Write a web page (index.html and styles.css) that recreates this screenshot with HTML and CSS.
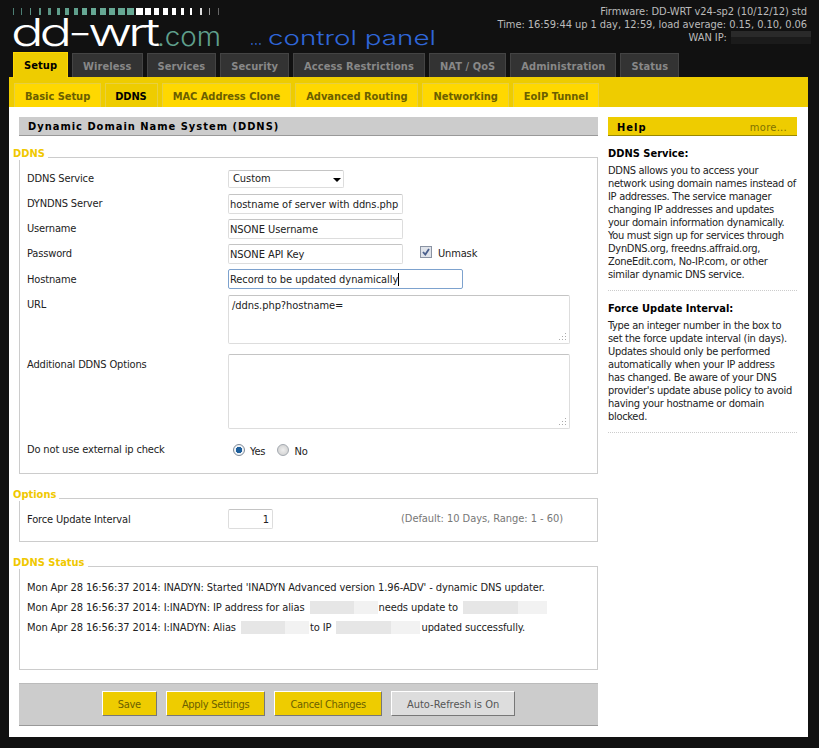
FILE: index.html
```html
<!DOCTYPE html>
<html lang="en">
<head>
<meta charset="utf-8">
<title>DD-WRT DDNS</title>
<link rel="stylesheet" href="styles.css">
</head>
<body>
<div class="page">
  <header class="top">
    <svg class="logo" width="440" height="52" viewBox="0 0 440 52">
      <g class="ticks">
        <rect x="13" y="8" width="1" height="7" fill="#4d7f74"/><rect x="21" y="8" width="1" height="7" fill="#4d7f74"/><rect x="30" y="8" width="1" height="7" fill="#5a9384"/><rect x="39" y="8" width="2" height="7" fill="#5a9384"/><rect x="48" y="8" width="3" height="7" fill="#5a9384"/><rect x="57" y="8" width="3" height="7" fill="#5f9f8c"/><rect x="65" y="8" width="4" height="7" fill="#5f9f8c"/><rect x="74" y="8" width="4" height="7" fill="#5f9f8c"/><rect x="82" y="8" width="5" height="7" fill="#66a894"/><rect x="91" y="8" width="5" height="7" fill="#66a894"/><rect x="100" y="8" width="6" height="7" fill="#66a894"/><rect x="109" y="8" width="6" height="7" fill="#66a894"/><rect x="118" y="8" width="7" height="7" fill="#66a894"/><rect x="127" y="8" width="7" height="7" fill="#66a894"/><rect x="136" y="8" width="7" height="7" fill="#fff"/><rect x="145" y="8" width="6" height="7" fill="#fff"/><rect x="154" y="8" width="5" height="7" fill="#fff"/><rect x="163" y="8" width="5" height="7" fill="#fff"/><rect x="172" y="8" width="4" height="7" fill="#fff"/><rect x="181" y="8" width="3" height="7" fill="#fff"/><rect x="190" y="8" width="2" height="7" fill="#fff"/><rect x="200" y="8" width="2" height="7" fill="#ddd"/><rect x="209" y="8" width="1" height="7" fill="#999"/><rect x="218" y="8" width="1" height="7" fill="#666"/>
      </g>
      <text class="logo-main" x="11" y="46" textLength="145" lengthAdjust="spacingAndGlyphs">dd-wrt</text>
      <text class="logo-com" x="157" y="46" textLength="64" lengthAdjust="spacingAndGlyphs">.com</text>
      <text class="logo-dots" x="250" y="45" textLength="12" lengthAdjust="spacingAndGlyphs">...</text>
      <text class="logo-panel" x="268" y="45" textLength="168" lengthAdjust="spacingAndGlyphs">control panel</text>
    </svg>
    <div class="sysinfo">
      <div>Firmware: DD-WRT v24-sp2 (10/12/12) std</div>
      <div>Time: 16:59:44 up 1 day, 12:59, load average: 0.15, 0.10, 0.06</div>
      <div class="wan">WAN IP: <span class="mask-dark"></span></div>
    </div>
  </header>

  <nav class="tabs">
    <a class="tab active">Setup</a>
    <a class="tab">Wireless</a>
    <a class="tab">Services</a>
    <a class="tab">Security</a>
    <a class="tab">Access Restrictions</a>
    <a class="tab">NAT / QoS</a>
    <a class="tab">Administration</a>
    <a class="tab">Status</a>
  </nav>

  <nav class="subtabs">
    <a class="subtab">Basic Setup</a>
    <a class="subtab active">DDNS</a>
    <a class="subtab">MAC Address Clone</a>
    <a class="subtab">Advanced Routing</a>
    <a class="subtab">Networking</a>
    <a class="subtab">EoIP Tunnel</a>
  </nav>

  <div class="body">
    <main class="main">
      <h2 class="bar">Dynamic Domain Name System (DDNS)</h2>

      <fieldset class="group group-ddns">
        <legend>DDNS</legend>
        <div class="row r-service"><label>DDNS Service</label><span class="select">Custom<i class="arrow"></i></span></div>
        <div class="row r-server"><label>DYNDNS Server</label><span class="input w175">hostname of server with ddns.php</span></div>
        <div class="row r-user"><label>Username</label><span class="input w175">NSONE Username</span></div>
        <div class="row r-pass"><label>Password</label><span class="input w175">NSONE API Key</span>
          <span class="check"><svg class="check-box" width="12" height="12" viewBox="0 0 12 12"><rect x=".5" y=".5" width="11" height="11" fill="#dfe3ea" stroke="#8a93a3"/><path d="M3 6l2.3 2.6L9 3" fill="none" stroke="#4a5f8c" stroke-width="1.8"/></svg>Unmask</span></div>
        <div class="row r-host"><label>Hostname</label><span class="input w235 focus">Record to be updated dynamically<i class="caret"></i></span></div>
        <div class="row r-url"><label>URL</label><span class="area h49">/ddns.php?hostname=<svg class="grip" width="8" height="8" viewBox="0 0 8 8"><path d="M6 0h1v1H6zM3 3h1v1H3zM6 3h1v1H6zM0 6h1v1H0zM3 6h1v1H3zM6 6h1v1H6z" fill="#aaa"/></svg></span></div>
        <div class="row r-opts"><label>Additional DDNS Options</label><span class="area h75"><svg class="grip" width="8" height="8" viewBox="0 0 8 8"><path d="M6 0h1v1H6zM3 3h1v1H3zM6 3h1v1H6zM0 6h1v1H0zM3 6h1v1H3zM6 6h1v1H6z" fill="#aaa"/></svg></span></div>
        <div class="row r-ip"><label>Do not use external ip check</label>
          <span class="radios">
            <i class="radio on"></i><span class="rlabel">Yes</span>
            <i class="radio"></i><span class="rlabel">No</span>
          </span></div>
      </fieldset>

      <fieldset class="group group-options">
        <legend>Options</legend>
        <div class="row r-force"><label>Force Update Interval</label><span class="input w45 right">1</span><span class="hint">(Default: 10 Days, Range: 1 - 60)</span></div>
      </fieldset>

      <fieldset class="group group-status">
        <legend>DDNS Status</legend>
        <p>Mon Apr 28 16:56:37 2014: INADYN: Started 'INADYN Advanced version 1.96-ADV' - dynamic DNS updater.</p>
        <p>Mon Apr 28 16:56:37 2014: I:INADYN: IP address for alias <span class="mask m68"></span>needs update to <span class="mask m84"></span></p>
        <p>Mon Apr 28 16:56:37 2014: I:INADYN: Alias <span class="mask m68"></span>to IP <span class="mask m84"></span>updated successfully.</p>
      </fieldset>

      <div class="actions">
        <a class="btn">Save</a>
        <a class="btn">Apply Settings</a>
        <a class="btn">Cancel Changes</a>
        <a class="btn grey">Auto-Refresh is On</a>
      </div>
    </main>

    <aside class="help">
      <div class="help-bar"><b>Help</b><span>more...</span></div>
      <section class="help-item">
        <h3>DDNS Service:</h3>
        <p>DDNS allows you to access your network using domain names instead of IP addresses. The service manager changing IP addresses and updates your domain information dynamically. You must sign up for services through DynDNS.org, freedns.affraid.org, ZoneEdit.com, No-IP.com, or other similar dynamic DNS service.</p>
      </section>
      <section class="help-item narrow">
        <h3>Force Update Interval:</h3>
        <p>Type an integer number in the box to set the force update interval (in days). Updates should only be performed automatically when your IP address has changed. Be aware of your DNS provider's update abuse policy to avoid having your hostname or domain blocked.</p>
      </section>
    </aside>
  </div>
</div>
</body>
</html>
```
FILE: styles.css
```css
* { box-sizing: border-box; }
html, body { margin: 0; padding: 0; background: #111; height: 748px; overflow: hidden; }
body { font: 11px/13px "DejaVu Sans Condensed", "DejaVu Sans", sans-serif; font-stretch: condensed; color: #222; letter-spacing: -.15px; }
.page { width: 819px; padding-right: 11px; padding-left: 9px; }
.top { height: 52px; position: relative; margin-left: -9px; margin-right: -11px; }
.logo { display: block; }
.logo-main { font: 300 38px "Inter", sans-serif; letter-spacing: -3px; fill: #fff; }
.logo-com { font: 300 26px "Inter", sans-serif; letter-spacing: 0; fill: #5f9f8c; }
.logo-dots { font: 300 18px "Inter", sans-serif; letter-spacing: 0; fill: #2f66d8; }
.logo-panel { font: 300 20px "Inter", sans-serif; letter-spacing: 0; fill: #2f66d8; }
.sysinfo { position: absolute; right: 12px; top: 5px; text-align: right; color: #bbb; line-height: 13px; white-space: nowrap; letter-spacing: -.05px; }
.wan { margin-right: -4px; }
.mask-dark { display: inline-block; width: 80px; height: 13px; background: linear-gradient(#2a2a2a 0 6px, #1b1b1b 6px); vertical-align: top; margin-left: 1px; }

.tabs { display: flex; height: 25px; padding-left: 4px; gap: 4px; align-items: flex-end; letter-spacing: .08px; }
.tab { height: 24px; background: #333; border: 1px solid #444; border-bottom: 0; color: #888; font-weight: bold; padding: 6px 10px 0; white-space: nowrap; }
.tab.active { height: 26px; margin-bottom: -1px; background: #eecc00; border: 1px solid #ffd800; border-bottom: 0; color: #000; padding: 6px 10px 0; z-index: 1; }

.subtabs { display: flex; height: 30px; background: #eecc00; padding: 6px 0 0 5px; gap: 4px; letter-spacing: -.03px; }
.subtab { height: 24px; background: #ffd800; border: 1px solid #e8d040; border-bottom: 0; color: #6b5f00; font-weight: bold; padding: 6px 10px 0; white-space: nowrap; }
.subtab.active { background: #eecc00; color: #000; letter-spacing: -.1px; padding: 6px 10px 0 9px; }

.body { display: flex; background: #fff; height: 630px; padding: 10px 10px 0; gap: 10px; }
.main { width: 579px; flex: none; }
.bar { margin: 0; height: 19px; background: #ccc; border-bottom: 1px solid #999; font-size: 11px; line-height: 19px; letter-spacing: 1px; color: #000; padding-left: 9px; }

.group { position: relative; margin: 0; border: 1px solid #ccc; padding: 0; min-width: 0; }
.group legend { position: absolute; left: -7px; top: -11px; background: #fff; color: #f0c800; font-weight: bold; padding: 0 3px 0 0; line-height: 13px; letter-spacing: 0; }
.group-ddns { margin-top: 21px; height: 317px; }
.group-options { margin-top: 24px; height: 44px; }
.group-status { margin-top: 24px; height: 104px; padding-top: 14px; }
.group-status p { margin: 0 0 7px 7px; height: 13px; white-space: nowrap; letter-spacing: -.1px; }

.row { position: relative; padding-left: 7px; display: flex; align-items: center; }
.row label { width: 201px; flex: none; }
.r-service { height: 25px; margin-top: 8px; }
.r-server { height: 25px; }
.r-user { height: 25px; }
.r-pass { height: 25px; }
.r-host { height: 26px; }
.r-url { height: 60px; align-items: flex-start; padding-top: 3px; }
.r-url label { padding-top: 3px; }
.r-opts { height: 85px; align-items: flex-start; padding-top: 2px; }
.r-opts label { padding-top: 4px; }
.r-ip { height: 30px; margin-top: -3px; }
.r-force { height: 40px; }

.input, .select, .area { display: block; background: #fff; border: 1px solid #ddd; border-top-color: #c4c4c4; border-radius: 2px; white-space: nowrap; letter-spacing: -.05px; }
.input { height: 20px; padding: 3px 1px 0; }
.w175 { width: 175px; }
.w235 { width: 235px; }
.w45 { width: 45px; }
.right { text-align: right; padding-right: 3px; }
.focus { border-color: #7da2ce; position: relative; }
.caret { display: inline-block; width: 1px; height: 13px; background: #000; vertical-align: top; }
.select { width: 116px; height: 18px; padding: 1px 4px 0; position: relative; }
.arrow { position: absolute; right: 2px; top: 7px; width: 0; height: 0; border: 4px solid transparent; border-top-color: #000; border-bottom: 0; }
.check { display: flex; align-items: center; gap: 6px; margin-left: 17px; }
.check-box { margin-top: -3px; }
.area { width: 342px; position: relative; padding: 3px; }
.h49 { height: 49px; }
.h75 { height: 75px; }
.grip { position: absolute; right: 2px; bottom: 2px; }
.radios { display: flex; align-items: center; margin: 2px 0 0 5px; }
.radio { width: 12px; height: 12px; border-radius: 50%; border: 1px solid #a3a9b0; background: radial-gradient(circle, #eee, #ccc); }
.radio.on { background: radial-gradient(circle, #1d5f9c 0 3px, #f0f4f8 3.5px); border-color: #7f8a97; }
.rlabel { margin: 2px 12px 0 5px; }
.hint { position: absolute; right: 34px; top: 13px; color: #777; letter-spacing: -.05px; }

.mask { display: inline-block; height: 13px; background: linear-gradient(90deg, #e6e6e6 0 65%, #f2f2f2 65%); vertical-align: top; margin: 0 1px 0 2px; }
.m68 { width: 68px; }
.m84 { width: 84px; }

.actions { margin-top: 13px; height: 43px; background: #ccc; border-top: 1px solid #bbb; border-bottom: 1px solid #999; display: flex; justify-content: center; gap: 9px; padding-top: 7px; letter-spacing: -.3px; }
.btn { height: 25px; background: #eecc00; border: 1px solid; border-color: #fff #777 #777 #fff; color: #6b5f00; padding: 6px 15px 0; white-space: nowrap; }
.btn.grey { background: #ddd; color: #555; letter-spacing: 0; }

.help { width: 189px; flex: none; line-height: 13px; letter-spacing: -.3px; }
.help-bar { height: 19px; background: #eecc00; border-bottom: 1px solid #998800; display: flex; justify-content: space-between; padding: 4px 10px 0 9px; letter-spacing: .3px; color: #7f7200; }
.help-bar b { color: #000; letter-spacing: 1px; }
.help-item { padding: 11px 0 9px; border-bottom: 1px dotted #ccc; }
.help-item h3 { margin: 0 0 4px; font-size: 11px; line-height: 13px; color: #000; letter-spacing: 0; }
.help-item p { margin: 0; }
.narrow p { padding-right: 4px; }
```
